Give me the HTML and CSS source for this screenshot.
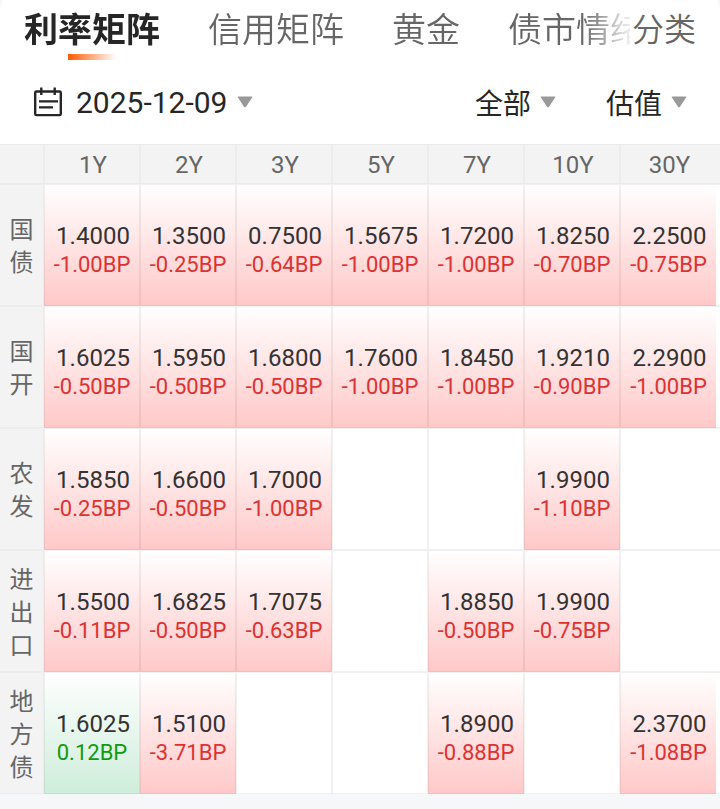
FILE: index.html
```html
<!DOCTYPE html>
<html lang="zh-CN">
<head>
<meta charset="utf-8">
<meta name="viewport" content="width=device-width, initial-scale=1">
<title>利率矩阵</title>
<link rel="stylesheet" href="styles.css">
</head>
<body>
<main class="panel">
  <header class="topbar">
    <nav class="tabs">
      <a class="tab tab-active" href="#rates" aria-current="page">利率矩阵</a>
      <a class="tab" href="#credit">信用矩阵</a>
      <a class="tab" href="#gold">黄金</a>
      <a class="tab tab-last" href="#mood">债市情绪</a>
    </nav>
    <button class="category" type="button">分类</button>
  </header>

  <div class="filters">
    <button class="date" type="button">
      <svg class="calendar" viewBox="0 0 30 30" fill="none" stroke="#262626" stroke-width="2.4" aria-hidden="true">
        <rect x="2.2" y="4.5" width="25.6" height="23.6" rx="1.2"/>
        <path d="M8.300 0.5V8M21.700 0.5V8M6 14.400H25M6 20.400H20"/>
      </svg>
      <span>2025-12-09</span>
      <svg class="caret" viewBox="0 0 16 12" aria-hidden="true"><path d="M1.5 0.5h13q1.3 0 .6 1L9 10.8q-1 1-2 0L.9 1.500q-.7-1 .6-1z" fill="#999"/></svg>
    </button>
    <div class="picker">
      <select class="select" aria-label="范围"><option>全部</option></select>
      <svg class="caret" viewBox="0 0 16 12" aria-hidden="true"><path d="M1.5 0.5h13q1.3 0 .6 1L9 10.8q-1 1-2 0L.9 1.500q-.7-1 .6-1z" fill="#999"/></svg>
    </div>
    <div class="picker">
      <select class="select" aria-label="类型"><option>估值</option></select>
      <svg class="caret" viewBox="0 0 16 12" aria-hidden="true"><path d="M1.5 0.5h13q1.3 0 .6 1L9 10.8q-1 1-2 0L.9 1.500q-.7-1 .6-1z" fill="#999"/></svg>
    </div>
  </div>

  <table class="matrix">
    <colgroup><col class="col-name"><col span="7"><col class="col-end"></colgroup>
    <thead>
      <tr><th></th><th scope="col">1Y</th><th scope="col">2Y</th><th scope="col">3Y</th><th scope="col">5Y</th><th scope="col">7Y</th><th scope="col">10Y</th><th scope="col">30Y</th><th class="end"></th></tr>
    </thead>
    <tbody>
      <tr>
        <th scope="row"><span class="name">国债</span></th>
        <td class="down"><span class="value">1.4000</span><span class="change">-1.00BP</span></td>
        <td class="down"><span class="value">1.3500</span><span class="change">-0.25BP</span></td>
        <td class="down"><span class="value">0.7500</span><span class="change">-0.64BP</span></td>
        <td class="down"><span class="value">1.5675</span><span class="change">-1.00BP</span></td>
        <td class="down"><span class="value">1.7200</span><span class="change">-1.00BP</span></td>
        <td class="down"><span class="value">1.8250</span><span class="change">-0.70BP</span></td>
        <td class="down"><span class="value">2.2500</span><span class="change">-0.75BP</span></td>
        <td class="end"></td>
      </tr>
      <tr>
        <th scope="row"><span class="name">国开</span></th>
        <td class="down"><span class="value">1.6025</span><span class="change">-0.50BP</span></td>
        <td class="down"><span class="value">1.5950</span><span class="change">-0.50BP</span></td>
        <td class="down"><span class="value">1.6800</span><span class="change">-0.50BP</span></td>
        <td class="down"><span class="value">1.7600</span><span class="change">-1.00BP</span></td>
        <td class="down"><span class="value">1.8450</span><span class="change">-1.00BP</span></td>
        <td class="down"><span class="value">1.9210</span><span class="change">-0.90BP</span></td>
        <td class="down"><span class="value">2.2900</span><span class="change">-1.00BP</span></td>
        <td class="end"></td>
      </tr>
      <tr>
        <th scope="row"><span class="name">农发</span></th>
        <td class="down"><span class="value">1.5850</span><span class="change">-0.25BP</span></td>
        <td class="down"><span class="value">1.6600</span><span class="change">-0.50BP</span></td>
        <td class="down"><span class="value">1.7000</span><span class="change">-1.00BP</span></td>
        <td></td>
        <td></td>
        <td class="down"><span class="value">1.9900</span><span class="change">-1.10BP</span></td>
        <td></td>
        <td class="end"></td>
      </tr>
      <tr>
        <th scope="row"><span class="name">进出口</span></th>
        <td class="down"><span class="value">1.5500</span><span class="change">-0.11BP</span></td>
        <td class="down"><span class="value">1.6825</span><span class="change">-0.50BP</span></td>
        <td class="down"><span class="value">1.7075</span><span class="change">-0.63BP</span></td>
        <td></td>
        <td class="down"><span class="value">1.8850</span><span class="change">-0.50BP</span></td>
        <td class="down"><span class="value">1.9900</span><span class="change">-0.75BP</span></td>
        <td></td>
        <td class="end"></td>
      </tr>
      <tr>
        <th scope="row"><span class="name">地方债</span></th>
        <td class="up"><span class="value">1.6025</span><span class="change">0.12BP</span></td>
        <td class="down"><span class="value">1.5100</span><span class="change">-3.71BP</span></td>
        <td></td>
        <td></td>
        <td class="down"><span class="value">1.8900</span><span class="change">-0.88BP</span></td>
        <td></td>
        <td class="down"><span class="value">2.3700</span><span class="change">-1.08BP</span></td>
        <td class="end"></td>
      </tr>
    </tbody>
  </table>
</main>
</body>
</html>
```

FILE: styles.css
```css
* {
  box-sizing: border-box;
}

body {
  margin: 0;
  background: #f6f7f9;
  color: #262626;
  font-family: Roboto, "Noto Sans CJK SC", sans-serif;
}

button,
select {
  margin: 0;
  padding: 0;
  border: 0;
  background: none;
  color: inherit;
  font: inherit;
}

.panel {
  background: #fff;
  border-radius: 4px 4px 0 0 / 14px 14px 0 0;
}

.topbar {
  display: flex;
  height: 60px;
  padding-right: 24px;
}

.tabs {
  display: flex;
  flex: 1;
  gap: 48px;
  min-width: 0;
  margin-right: 2px;
  padding-left: 24px;
  overflow: hidden;
  mask-image: linear-gradient(to left, rgba(0, 0, 0, 0.1), #000 48px);
}

.tab {
  display: flex;
  flex: none;
  flex-direction: column;
  align-items: center;
  color: #666;
  font-size: 34px;
  font-weight: 350;
  line-height: 60px;
  text-decoration: none;
  white-space: nowrap;
}

.tab-active {
  color: #262626;
  font-weight: 700;
}

.tab-active::after {
  content: "";
  width: 48px;
  height: 6px;
  margin-top: -6px;
  background: linear-gradient(to right, #ff5a00, rgba(255, 90, 0, 0));
}

.tab-last {
  display: block;
  flex: 0 1 auto;
  min-width: 0;
  overflow: hidden;
}

.category {
  flex: none;
  color: #666;
  font-size: 32px;
  font-weight: 350;
  line-height: 60px;
}

.filters {
  display: flex;
  align-items: center;
  gap: 50px;
  height: 84px;
  padding: 0 33px;
}

.date {
  display: flex;
  align-items: center;
  gap: 10px;
  margin-right: auto;
  font-size: 30px;
}

.calendar {
  width: 30px;
  height: 30px;
  margin-right: 3px;
}

.caret {
  width: 16px;
  height: 12px;
}

.picker {
  display: flex;
  align-items: center;
  gap: 8px;
}

.select {
  appearance: none;
  height: 48px;
  padding-top: 6px;
  font-size: 28px;
  line-height: 40px;
}

.matrix {
  width: 100%;
  table-layout: fixed;
  border-spacing: 0;
  background: #fff;
}

.col-name {
  width: 44px;
}

.col-end {
  width: 4px;
}

.matrix th,
.matrix td {
  padding: 0;
  border: 1px solid rgba(0, 0, 0, 0.06);
  text-align: center;
}

.matrix th {
  border-color: #ececec;
  background: #f3f3f3;
  color: #666;
  font-size: 24px;
  font-weight: 400;
}

.matrix thead th {
  height: 40px;
  padding-top: 2px;
  padding-left: 2px;
}

.matrix tbody th,
.matrix td {
  height: 122px;
}

.matrix td {
  padding-top: 10px;
  background-origin: border-box;
}

.matrix tr > :first-child {
  border-left: 0;
}

.matrix tr > :nth-child(8) {
  border-right: 0;
}

.matrix tr > .end {
  padding-left: 0;
  border-right: 0;
  border-left: 0;
}

.matrix tbody th {
  padding-top: 4px;
}

.name {
  display: block;
  width: 24px;
  margin: 0 auto;
  line-height: 33px;
  word-break: break-all;
}

.value,
.change {
  display: block;
}

.value {
  padding-left: 2px;
  color: #333;
  font-size: 24px;
  line-height: 30px;
}

.change {
  font-size: 22px;
  line-height: 28px;
}

.down {
  background-image: linear-gradient(#fff, #ffc8c8);
}

.down .change {
  color: #dc3232;
}

.up {
  background-image: linear-gradient(#fff, #ceedda);
}

.up .change {
  color: #0f9b0f;
}
```
